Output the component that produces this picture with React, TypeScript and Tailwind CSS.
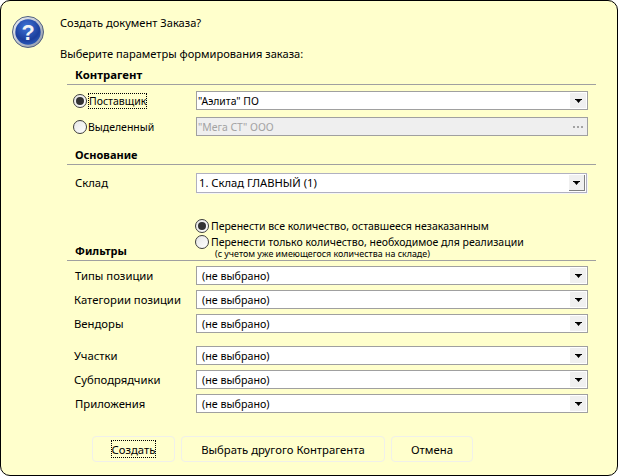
function Arrow() {
  return (
    <svg width="7" height="4" viewBox="0 0 7 4" className="block">
      <path d="M0 0h7v1H6L3.5 4 1 1H0z" fill="#000" />
    </svg>
  )
}

function Radio({ checked }: { checked?: boolean }) {
  return (
    <span className="flex size-[14px] shrink-0 items-center justify-center rounded-full border border-[#3c3c3c] bg-[linear-gradient(135deg,#e6e6e6,#ffffff)]">
      {checked && <span className="size-[8px] rounded-full bg-[#333333]" />}
    </span>
  )
}

function Combo({ text, pl = 'pl-[5px]', size = 'text-[10.7px]' }: { text: string; pl?: string; size?: string }) {
  return (
    <div className={`flex h-[19px] w-[392px] items-center justify-between border border-[#a0a0a0] bg-white pr-[1px] ${pl} ${size}`}>
      <span>{text}</span>
      <span className="flex h-[15px] w-[16px] items-center justify-center bg-[#f0f0f0]">
        <Arrow />
      </span>
    </div>
  )
}

function FilterRow({ label, mt = 'mt-[5px]', lx = 'pl-[7px]' }: { label: string; mt?: string; lx?: string }) {
  return (
    <div className={`flex h-[19px] items-center ${mt}`}>
      <span className={`w-[129px] text-[11.3px] ${lx}`}>{label}</span>
      <Combo text="(не выбрано)" />
    </div>
  )
}

function Section({ title, className = '' }: { title: string; className?: string }) {
  return (
    <div className={`border-b border-[#a0a0a0] pl-[8px] font-bold ${className}`}>{title}</div>
  )
}

function Button({ children, w, focus }: { children: string; w: string; focus?: boolean }) {
  return (
    <div className={`flex h-[26px] items-center justify-center rounded-[4px] border border-[#f0f0ea] text-[11.3px] ${w}`}>
      <span className={focus ? 'border border-dotted border-black pt-[1px] leading-[15px]' : 'pt-[2px] leading-[16px]'}>{children}</span>
    </div>
  )
}

function HelpIcon() {
  return (
    <svg width="32" height="32" viewBox="0 0 34 34" className="shrink-0">
      <defs>
        <linearGradient id="ring" x1="0" y1="0" x2="1" y2="1">
          <stop offset="0" stopColor="#f2f4f8" />
          <stop offset="1" stopColor="#8a94a8" />
        </linearGradient>
        <radialGradient id="ball" cx="0.45" cy="0.3" r="0.8">
          <stop offset="0" stopColor="#3f75d8" />
          <stop offset="0.65" stopColor="#1c3f9c" />
          <stop offset="1" stopColor="#2c63c4" />
        </radialGradient>
      </defs>
      <circle cx="17" cy="17" r="16.5" fill="url(#ring)" stroke="#4a5a7a" strokeWidth="1" />
      <circle cx="17" cy="17" r="13.5" fill="url(#ball)" />
      <text x="17" y="25" textAnchor="middle" fontSize="23" fontWeight="700" fill="#f4f4f4" fontFamily="'Liberation Sans', sans-serif">?</text>
    </svg>
  )
}

export default function App() {
  return (
    <div className="h-[476px] w-[618px] overflow-hidden bg-white">
      <div className="h-[476px] w-[618px] rounded-[10px] border border-black bg-[#ffffcc] font-['Noto_Sans',sans-serif] text-[11px] leading-[14px] text-black">
        {/* Header */}
        <div className="flex pl-[11px] pt-[15px]">
          <HelpIcon />
          <div className="ml-[16px]">
            <div className="text-[11.1px] leading-[14px]">Создать документ Заказа?</div>
            <div className="mt-[17px] text-[11.1px] leading-[14px]">Выберите параметры формирования заказа:</div>
          </div>
        </div>

        <div className="ml-[66px] w-[529px]">
          <Section title="Контрагент" className="mt-[7px] h-[17px] text-[11.4px]" />
          <div className="mt-[6px] flex h-[19px] items-center">
            <div className="flex w-[129px] items-center pl-[6px] text-[10.5px]">
              <Radio checked />
              <span className="ml-[1px] border border-dotted border-black leading-[14px]">Поставщик</span>
            </div>
            <Combo text={'"Аэлита" ПО'} pl="pl-[1px]" size="text-[10.4px]" />
          </div>
          <div className="mt-[7px] flex h-[19px] items-center">
            <div className="flex w-[129px] items-center pl-[6px] text-[10.5px]">
              <Radio />
              <span className="ml-[1px]">Выделенный</span>
            </div>
            <div className="flex h-[19px] w-[392px] items-center justify-between border border-[#a0a0a0] bg-[#efefef] pl-[1px] pr-[4px] text-[10.4px] text-[#a3a3a3]">
              <span>"Мега СТ" ООО</span>
              <span className="flex gap-[2px]">
                <span className="size-[2px] bg-[#a3a3a3]" />
                <span className="size-[2px] bg-[#a3a3a3]" />
                <span className="size-[2px] bg-[#a3a3a3]" />
              </span>
            </div>
          </div>

          <Section title="Основание" className="mt-[12px] h-[17px]" />
          <div className="mt-[8px] flex h-[20px] items-center">
            <span className="w-[129px] pl-[8px] text-[11.3px]">Склад</span>
            <div className="flex h-[20px] w-[391px] items-center justify-between border border-[#b0b0c0] bg-white pl-[2px] pr-[1px] text-[11.2px] shadow-[1px_1px_0_#f6f6f6]">
              <span>1. Склад ГЛАВНЫЙ (1)</span>
              <span className="flex h-[16px] w-[16px] items-center justify-center border-b border-r border-[#808080] bg-[#f0f0f0]">
                <Arrow />
              </span>
            </div>
          </div>

          <div className="mt-[26px] flex items-center pl-[128px] text-[10.5px]">
            <Radio checked />
            <span className="ml-[2px]">Перенести все количество, оставшееся незаказанным</span>
          </div>
          <div className="mt-[2px] flex items-center pl-[128px] text-[10.5px]">
            <Radio />
            <span className="ml-[2px]">Перенести только количество, необходимое для реализации</span>
          </div>
          <div className="flex h-[12px] items-start border-b border-[#a0a0a0]">
            <span className="mt-[-5px] w-[148px] pl-[8px] font-bold">Фильтры</span>
            <span className="text-[8.9px] leading-[9px]">(с учетом уже имеющегося количества на складе)</span>
          </div>

          <FilterRow label="Типы позиции" lx="pl-[8px]" />
          <FilterRow label="Категории позиции" />
          <FilterRow label="Вендоры" />
          <FilterRow label="Участки" mt="mt-[13px]" />
          <FilterRow label="Субподрядчики" />
          <FilterRow label="Приложения" lx="pl-[8px]" />
        </div>

        <div className="ml-[91px] mt-[23px] flex gap-[6px]">
          <Button w="w-[83px]" focus>Создать</Button>
          <Button w="w-[204px]">Выбрать другого Контрагента</Button>
          <Button w="w-[82px]">Отмена</Button>
        </div>
      </div>
    </div>
  )
}
